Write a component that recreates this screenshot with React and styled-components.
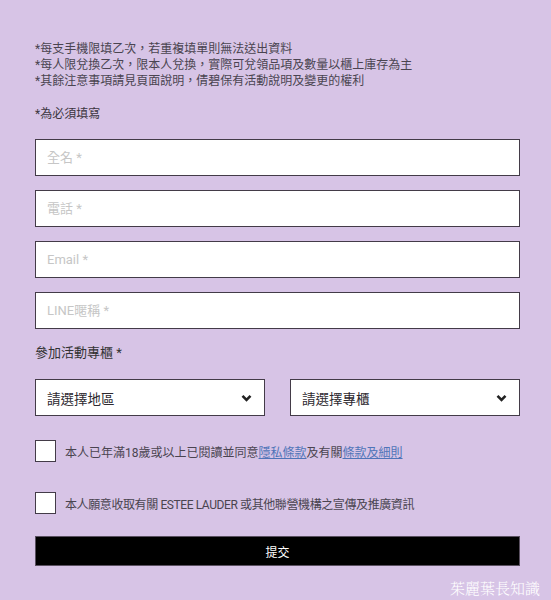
import React from 'react';
import styled, { createGlobalStyle } from 'styled-components';

const GlobalStyle = createGlobalStyle`
  html, body {
    margin: 0;
    padding: 0;
    background: #d7c4e6;
  }
  body {
    font-family: Roboto, "Noto Sans CJK TC", sans-serif;
  }
`;

const Page = styled.div`
  position: relative;
  box-sizing: border-box;
  width: 551px;
  height: 600px;
  padding: 41px 31px 0 35px;
  background: #d7c4e6;
`;

const Notes = styled.div`
  font-size: 12px;
  line-height: 16px;
  color: #4a4450;
`;

const Required = styled.div`
  margin-top: 17px;
  font-size: 12px;
  line-height: 16px;
  color: #3c3640;
`;

const Fields = styled.div`
  display: flex;
  flex-direction: column;
  gap: 14px;
  margin-top: 17px;
`;

const TextInput = styled.input`
  box-sizing: border-box;
  width: 100%;
  height: 37px;
  margin: 0;
  padding: 0 11px;
  border: 1px solid #433b48;
  border-radius: 0;
  background: #fff;
  font-family: Roboto, "Noto Sans CJK TC", sans-serif;
  font-size: 13px;
  color: #333;
  outline: none;

  &::placeholder {
    color: #c6c6c6;
  }
`;

const GroupLabel = styled.div`
  margin-top: 15px;
  font-size: 13px;
  line-height: 18px;
  color: #333;
`;

const SelectRow = styled.div`
  display: grid;
  grid-template-columns: 1fr 1fr;
  gap: 25px;
  margin-top: 17px;
`;

const SelectBox = styled.div`
  box-sizing: border-box;
  height: 37px;
  display: flex;
  align-items: center;
  justify-content: space-between;
  padding: 0 12px 0 11px;
  border: 1px solid #433b48;
  background: #fff;
  font-size: 13.5px;
  color: #2e2a30;
`;

const Chevron = () => (
  <svg width="11" height="8" viewBox="0 0 11 8">
    <polyline points="1.5,1.8 5.5,5.8 9.5,1.8" fill="none" stroke="#222" strokeWidth="2.6" />
  </svg>
);

const CheckRow = styled.label`
  display: flex;
  align-items: center;
  gap: 9px;
  margin-top: ${p => p.$top}px;
  font-size: 12px;
  letter-spacing: ${p => p.$tight ? '-0.4px' : '0'};
  color: #4a4450;
`;

const Box = styled.span`
  box-sizing: border-box;
  flex: none;
  width: 21px;
  height: 22px;
  border: 1px solid #433b48;
  background: #fff;
`;

const Link = styled.a`
  color: #4f74b8;
  text-decoration: underline;
`;

const Submit = styled.button`
  display: block;
  box-sizing: border-box;
  width: 100%;
  height: 30px;
  margin-top: 22px;
  border: 1px solid #5a5060;
  background: #000;
  color: #fff;
  font-family: Roboto, "Noto Sans CJK TC", sans-serif;
  font-size: 12px;
`;

const Watermark = styled.div`
  position: absolute;
  right: 11px;
  bottom: 2px;
  font-family: "AR PL UMing TW", "Noto Serif CJK TC", "Noto Sans CJK TC", serif;
  font-size: 15px;
  font-weight: 300;
  color: #fff;
`;

export default function App() {
  return (
    <Page>
      <GlobalStyle />
      <Notes>
        <div>*每支手機限填乙次，若重複填單則無法送出資料</div>
        <div>*每人限兌換乙次，限本人兌換，實際可兌領品項及數量以櫃上庫存為主</div>
        <div>*其餘注意事項請見頁面說明，倩碧保有活動說明及變更的權利</div>
      </Notes>
      <Required>*為必須填寫</Required>
      <Fields>
        <TextInput placeholder="全名 *" />
        <TextInput placeholder="電話 *" />
        <TextInput placeholder="Email *" />
        <TextInput placeholder="LINE暱稱 *" />
      </Fields>
      <GroupLabel>參加活動專櫃 *</GroupLabel>
      <SelectRow>
        <SelectBox>
          <span>請選擇地區</span>
          <Chevron />
        </SelectBox>
        <SelectBox>
          <span>請選擇專櫃</span>
          <Chevron />
        </SelectBox>
      </SelectRow>
      <CheckRow $top={24}>
        <Box />
        <span>
          本人已年滿18歲或以上已閱讀並同意<Link href="#">隱私條款</Link>及有關<Link href="#">條款及細則</Link>
        </span>
      </CheckRow>
      <CheckRow $top={30} $tight>
        <Box />
        <span>本人願意收取有關 ESTEE LAUDER 或其他聯營機構之宣傳及推廣資訊</span>
      </CheckRow>
      <Submit>提交</Submit>
      <Watermark>茱麗葉長知識</Watermark>
    </Page>
  );
}
